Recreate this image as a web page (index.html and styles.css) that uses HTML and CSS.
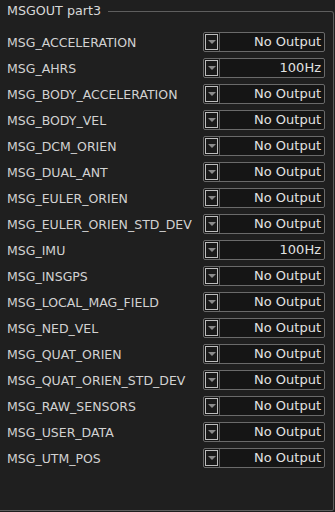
FILE: index.html
```html
<!DOCTYPE html>
<html lang="en">
<head>
    <meta charset="UTF-8">
    <meta name="viewport" content="width=device-width, initial-scale=1.0">
    <title>MSGOUT part3</title>
    <link rel="stylesheet" href="styles.css">
</head>
<body>

<fieldset class="group">
    <legend class="group-title">MSGOUT part3</legend>

    <div class="rows">
        <div class="row"><span class="label">MSG_ACCELERATION</span><div class="combo"><span class="combo-btn"><span class="arrow"></span></span><span class="combo-value">No Output</span></div></div>
        <div class="row"><span class="label">MSG_AHRS</span><div class="combo"><span class="combo-btn"><span class="arrow"></span></span><span class="combo-value">100Hz</span></div></div>
        <div class="row"><span class="label">MSG_BODY_ACCELERATION</span><div class="combo"><span class="combo-btn"><span class="arrow"></span></span><span class="combo-value">No Output</span></div></div>
        <div class="row"><span class="label">MSG_BODY_VEL</span><div class="combo"><span class="combo-btn"><span class="arrow"></span></span><span class="combo-value">No Output</span></div></div>
        <div class="row"><span class="label">MSG_DCM_ORIEN</span><div class="combo"><span class="combo-btn"><span class="arrow"></span></span><span class="combo-value">No Output</span></div></div>
        <div class="row"><span class="label">MSG_DUAL_ANT</span><div class="combo"><span class="combo-btn"><span class="arrow"></span></span><span class="combo-value">No Output</span></div></div>
        <div class="row"><span class="label">MSG_EULER_ORIEN</span><div class="combo"><span class="combo-btn"><span class="arrow"></span></span><span class="combo-value">No Output</span></div></div>
        <div class="row"><span class="label">MSG_EULER_ORIEN_STD_DEV</span><div class="combo"><span class="combo-btn"><span class="arrow"></span></span><span class="combo-value">No Output</span></div></div>
        <div class="row"><span class="label">MSG_IMU</span><div class="combo"><span class="combo-btn"><span class="arrow"></span></span><span class="combo-value">100Hz</span></div></div>
        <div class="row"><span class="label">MSG_INSGPS</span><div class="combo"><span class="combo-btn"><span class="arrow"></span></span><span class="combo-value">No Output</span></div></div>
        <div class="row"><span class="label">MSG_LOCAL_MAG_FIELD</span><div class="combo"><span class="combo-btn"><span class="arrow"></span></span><span class="combo-value">No Output</span></div></div>
        <div class="row"><span class="label">MSG_NED_VEL</span><div class="combo"><span class="combo-btn"><span class="arrow"></span></span><span class="combo-value">No Output</span></div></div>
        <div class="row"><span class="label">MSG_QUAT_ORIEN</span><div class="combo"><span class="combo-btn"><span class="arrow"></span></span><span class="combo-value">No Output</span></div></div>
        <div class="row"><span class="label">MSG_QUAT_ORIEN_STD_DEV</span><div class="combo"><span class="combo-btn"><span class="arrow"></span></span><span class="combo-value">No Output</span></div></div>
        <div class="row"><span class="label">MSG_RAW_SENSORS</span><div class="combo"><span class="combo-btn"><span class="arrow"></span></span><span class="combo-value">No Output</span></div></div>
        <div class="row"><span class="label">MSG_USER_DATA</span><div class="combo"><span class="combo-btn"><span class="arrow"></span></span><span class="combo-value">No Output</span></div></div>
        <div class="row"><span class="label">MSG_UTM_POS</span><div class="combo"><span class="combo-btn"><span class="arrow"></span></span><span class="combo-value">No Output</span></div></div>
    </div>
</fieldset>

</body>
</html>
```

FILE: styles.css
```css
/* reset */
* {
    margin: 0;
    padding: 0;
    box-sizing: border-box;
}

body {
    font-family: "DejaVu Sans", Verdana, sans-serif;
    font-size: 12px;
    background-color: #1f1f1f;
    color: #d2d2d2;
    width: 335px;
    height: 512px;
    overflow: hidden;
}

/* group box */
.group {
    margin-top: 4px;
    width: 334px;
    height: 507px;
    border: 1px solid #5e5e5e;
    border-left: none;
    border-top-right-radius: 3px;
    border-bottom-right-radius: 2px;
}

.group-title {
    padding: 0 7px 0 7px;
    font-size: 12.7px;
    line-height: 14px;
    color: #d8d8d8;
}

.rows {
    display: flex;
    flex-direction: column;
    gap: 6px;
    padding-top: 14px;
}

.row {
    display: flex;
    align-items: center;
    height: 20px;
}

.label {
    width: 203px;
    padding-left: 7px;
    font-size: 12.5px;
    white-space: nowrap;
}

/* combo box */
.combo {
    display: flex;
    width: 122px;
    height: 20px;
    border: 1px solid #6a6a6a;
    border-radius: 2px;
    background-color: #151515;
}

.combo-btn {
    display: flex;
    align-items: center;
    justify-content: center;
    width: 16px;
    border-right: 1px solid #5a5a5a;
    padding: 1px;
}

.combo-btn .arrow {
    display: block;
    width: 13px;
    height: 16px;
    border: 1px solid #bdbdbd;
    background-color: #1a1a1a;
    position: relative;
}

.combo-btn .arrow::after {
    content: "";
    position: absolute;
    left: 2px;
    top: 5px;
    border-left: 4px solid transparent;
    border-right: 4px solid transparent;
    border-top: 4px solid #8a8a8a;
}

.combo-value {
    flex: 1;
    text-align: right;
    padding-right: 3px;
    font-size: 13px;
    line-height: 18px;
    color: #e2e2e2;
}
```
